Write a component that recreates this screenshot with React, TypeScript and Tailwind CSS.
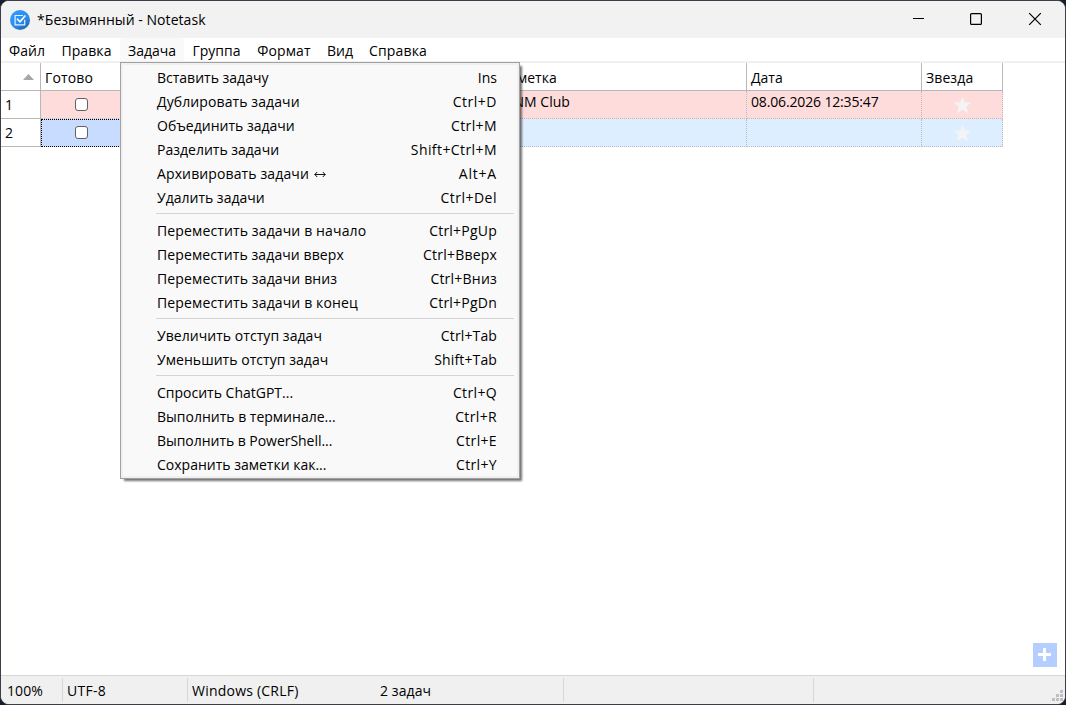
import React from "react";

type Entry = { label: string; keys: string; arrow?: boolean; track?: string; keyTrack?: string };

const groups: Entry[][] = [
  [
    { label: "Вставить задачу", keys: "Ins" },
    { label: "Дублировать задачи", keys: "Ctrl+D", track: "tracking-[0.1px]", keyTrack: "tracking-[0.5px]" },
    { label: "Объединить задачи", keys: "Ctrl+M", keyTrack: "tracking-[0.4px]" },
    { label: "Разделить задачи", keys: "Shift+Ctrl+M", keyTrack: "tracking-[0.42px]" },
    { label: "Архивировать задачи", arrow: true, keys: "Alt+A", track: "tracking-[0.12px]", keyTrack: "tracking-[0.8px]" },
    { label: "Удалить задачи", keys: "Ctrl+Del", keyTrack: "tracking-[0.5px]" },
  ],
  [
    { label: "Переместить задачи в начало", keys: "Ctrl+PgUp", track: "tracking-[0.13px]", keyTrack: "tracking-[0.22px]" },
    { label: "Переместить задачи вверх", keys: "Ctrl+Вверх", track: "tracking-[0.1px]", keyTrack: "tracking-[0.2px]" },
    { label: "Переместить задачи вниз", keys: "Ctrl+Вниз", track: "tracking-[0.13px]", keyTrack: "tracking-[0.22px]" },
    { label: "Переместить задачи в конец", keys: "Ctrl+PgDn", track: "tracking-[0.13px]", keyTrack: "tracking-[0.22px]" },
  ],
  [
    { label: "Увеличить отступ задач", keys: "Ctrl+Tab", track: "tracking-[0.05px]", keyTrack: "tracking-[0.13px]" },
    { label: "Уменьшить отступ задач", keys: "Shift+Tab", track: "tracking-[0.05px]", keyTrack: "tracking-[0.13px]" },
  ],
  [
    { label: "Спросить ChatGPT...", keys: "Ctrl+Q", keyTrack: "tracking-[0.35px]" },
    { label: "Выполнить в терминале...", keys: "Ctrl+R", keyTrack: "tracking-[0.35px]" },
    { label: "Выполнить в PowerShell...", keys: "Ctrl+E", track: "tracking-[-0.04px]", keyTrack: "tracking-[0.35px]" },
    { label: "Сохранить заметки как...", keys: "Ctrl+Y", keyTrack: "tracking-[0.35px]" },
  ],
];

const menus = [
  { label: "Файл", box: "w-[52px]" },
  { label: "Правка", box: "w-[67px] tracking-[0.1px]" },
  { label: "Задача", box: "w-[64px]", open: true },
  { label: "Группа", box: "w-[65px]" },
  { label: "Формат", box: "w-[70px] tracking-[0.1px]" },
  { label: "Вид", box: "w-[42px]" },
  { label: "Справка", box: "w-[74px] tracking-[0.15px]" },
];

function TitleBar() {
  return (
    <header className="flex h-[37px] shrink-0 items-center bg-[#f2f2f2] pl-[9px]">
      <svg width="20" height="20" viewBox="0 0 20 20">
        <defs>
          <linearGradient id="badge" x1="0.2" y1="0" x2="0.9" y2="1">
            <stop offset="0" stopColor="#2f9bff" />
            <stop offset="0.55" stopColor="#2b8cee" />
            <stop offset="1" stopColor="#1a5f9e" />
          </linearGradient>
        </defs>
        <circle cx="10" cy="10" r="10" fill="url(#badge)" />
        <path d="M13 5.5H5.1v9.4h9.6V9.8" fill="none" stroke="#e4f1ff" strokeWidth="1.2" />
        <path d="M7 8.8l3 3 5.4-6.3" fill="none" stroke="#fff" strokeWidth="1.6" />
      </svg>
      <span className="ml-[7px] grow tracking-[0.05px]">*Безымянный - Notetask</span>
      <svg width="152" height="37" viewBox="913 1 152 37" fill="none" stroke="#000">
        <path d="M912 18.5h12" />
        <rect x="970.6" y="13.6" width="10.8" height="10.8" rx="1" strokeWidth="1.2" />
        <path d="M1029.2 13.2l11.6 11.6M1040.8 13.2l-11.6 11.6" strokeWidth="1.2" />
      </svg>
    </header>
  );
}

function MenuBar() {
  return (
    <nav className="flex h-[25px] shrink-0 border-b-2 border-[#f0f0f0] bg-white">
      {menus.map((m) => (
        <div
          key={m.label}
          className={`flex items-center justify-center rounded-t-sm pt-[2px] ${m.box} ${m.open ? "bg-[#f9f9f9]" : ""}`}
        >
          {m.label}
        </div>
      ))}
    </nav>
  );
}

function Check() {
  return <span className="size-[13px] rounded-[3px] border border-[#626262] bg-white" />;
}

function Star() {
  return (
    <svg width="17" height="17" viewBox="0 0 17 17" className="mt-px">
      <path d="M8.5 0l2.3 5.6H17l-4.7 4.1L14 16.2l-5.5-3.5L3 16.2l1.7-6.5L0 5.6h6.2z" fill="#f4f4f4" />
    </svg>
  );
}

const cols = "grid grid-cols-[40px_706px_175px_81px] w-[1002px]";

function Table() {
  return (
    <div className="shrink-0">
      <div className={`${cols} h-[28px]`}>
        <div className="flex items-center justify-end border-r border-b border-[#b8b8b8] pr-[6px]">
          <svg width="11" height="6" viewBox="0 0 11 6">
            <path d="M5.5 0L11 6H0z" fill="#a6a6a6" />
          </svg>
        </div>
        <div className="flex items-center border-r border-b border-[#b8b8b8] pt-[2px] pl-1">
          <span className="w-[456px] tracking-[0.15px]">Готово</span>
          <span>Заметка</span>
        </div>
        <div className="flex items-center border-r border-b border-[#b8b8b8] pt-[2px] pl-1">Дата</div>
        <div className="flex items-center border-r border-b border-[#b8b8b8] pt-[2px] pl-1 tracking-[0.1px]">Звезда</div>
      </div>
      <div className={`${cols} h-[28px]`}>
        <div className="flex items-center border-r border-b border-[#b8b8b8] pt-px pl-1">1</div>
        <div className="flex border-r border-b border-dotted border-[#bcbcbc] bg-[#ffdcdc]">
          <span className="flex w-[80px] items-center justify-center"><Check /></span>
          <span className="ml-[378px] pl-1 leading-[22px]">NNM Club</span>
        </div>
        <div className="border-r border-b border-dotted border-[#bcbcbc] bg-[#ffdcdc] pl-1 leading-[22px] tracking-[-0.15px]">08.06.2026 12:35:47</div>
        <div className="flex items-center justify-center border-r border-b border-dotted border-[#bcbcbc] bg-[#ffdcdc]"><Star /></div>
      </div>
      <div className={`${cols} h-[28px]`}>
        <div className="flex items-center border-r border-b border-[#b8b8b8] pt-px pl-1">2</div>
        <div className="flex border-r border-b border-dotted border-[#bcbcbc] bg-[#dceeff]">
          <span className="-mb-px flex w-[80px] items-center justify-center border border-dotted border-black bg-[#c8dcff] pb-px"><Check /></span>
        </div>
        <div className="border-r border-b border-dotted border-[#bcbcbc] bg-[#dceeff]" />
        <div className="flex items-center justify-center border-r border-b border-dotted border-[#bcbcbc] bg-[#dceeff]"><Star /></div>
      </div>
    </div>
  );
}

function DropDown() {
  return (
    <div className="absolute top-[62px] left-[120px] h-[417px] w-[400px] border border-[#a0a0a0] bg-[#f9f9f9] shadow-[3px_3px_2px_-1px_rgba(0,0,0,0.55)]">
      <div className="h-full border-2 border-[#f0f0f0] pt-px">
        {groups.map((g, i) => (
          <div key={i}>
            {i > 0 && (
              <div className="mr-[3px] ml-[33px] flex h-[9px] pt-[3px]">
                <div className="h-px grow bg-[#d4d4d4]" />
              </div>
            )}
            {g.map((e) => (
              <div key={e.label} className="flex h-6 items-center justify-between pr-[20px] pl-[34px]">
                <span className="flex items-center">
                  <span className={e.track}>{e.label}</span>
                  {e.arrow && (
                    <svg width="12" height="7" viewBox="0 0 12 7" className="ml-[5px]" fill="none" stroke="#111">
                      <path d="M0.8 3.5h10.4M3.2 1L0.8 3.5 3.2 6M8.8 1l2.4 2.5L8.8 6" />
                    </svg>
                  )}
                </span>
                <span className={e.keyTrack}>{e.keys}</span>
              </div>
            ))}
          </div>
        ))}
      </div>
    </div>
  );
}

function StatusBar() {
  return (
    <footer className="flex h-[29px] shrink-0 border-t border-[#d7d7d7] bg-[#f0f0f0] py-[2px] leading-[26px]">
      <div className="w-[62px] border-r border-[#d7d7d7] pl-[6px] tracking-[0.1px]">100%</div>
      <div className="w-[125px] border-r border-[#d7d7d7] pl-1 tracking-[0.3px]">UTF-8</div>
      <div className="flex w-[376px] border-r border-[#d7d7d7] pl-1">
        <span className="w-[188px] tracking-[0.22px]">Windows (CRLF)</span>
        <span className="tracking-[0.1px]">2 задач</span>
      </div>
      <div className="w-[250px] border-r border-[#d7d7d7]" />
      <div className="flex grow items-end justify-end">
        <svg width="13" height="12" viewBox="0 0 13 12" fill="#bfbfbf">
          <path d="M8 0h3v3H8zM4 4h3v3H4zM8 4h3v3H8zM0 8h3v3H0zM4 8h3v3H4zM8 8h3v3H8z" />
        </svg>
      </div>
    </footer>
  );
}

export default function App() {
  return (
    <div className="relative h-[705px] w-[1066px] overflow-hidden bg-[#16202c] font-['Open_Sans','Noto_Sans',sans-serif] text-[14px] leading-5 whitespace-nowrap text-black">
      <div className="flex h-full flex-col overflow-hidden rounded-[9px] border border-[#3b3d48] bg-white">
        <TitleBar />
        <MenuBar />
        <Table />
        <main className="flex grow items-end justify-end pr-2 pb-2">
          <button className="flex size-6 items-center justify-center bg-[#b4ceff] pr-px pb-px">
            <svg width="13" height="13" viewBox="0 0 13 13">
              <path d="M5 0h3v5h5v3H8v5H5V8H0V5h5z" fill="#fff" />
            </svg>
          </button>
        </main>
        <StatusBar />
      </div>
      <DropDown />
    </div>
  );
}
